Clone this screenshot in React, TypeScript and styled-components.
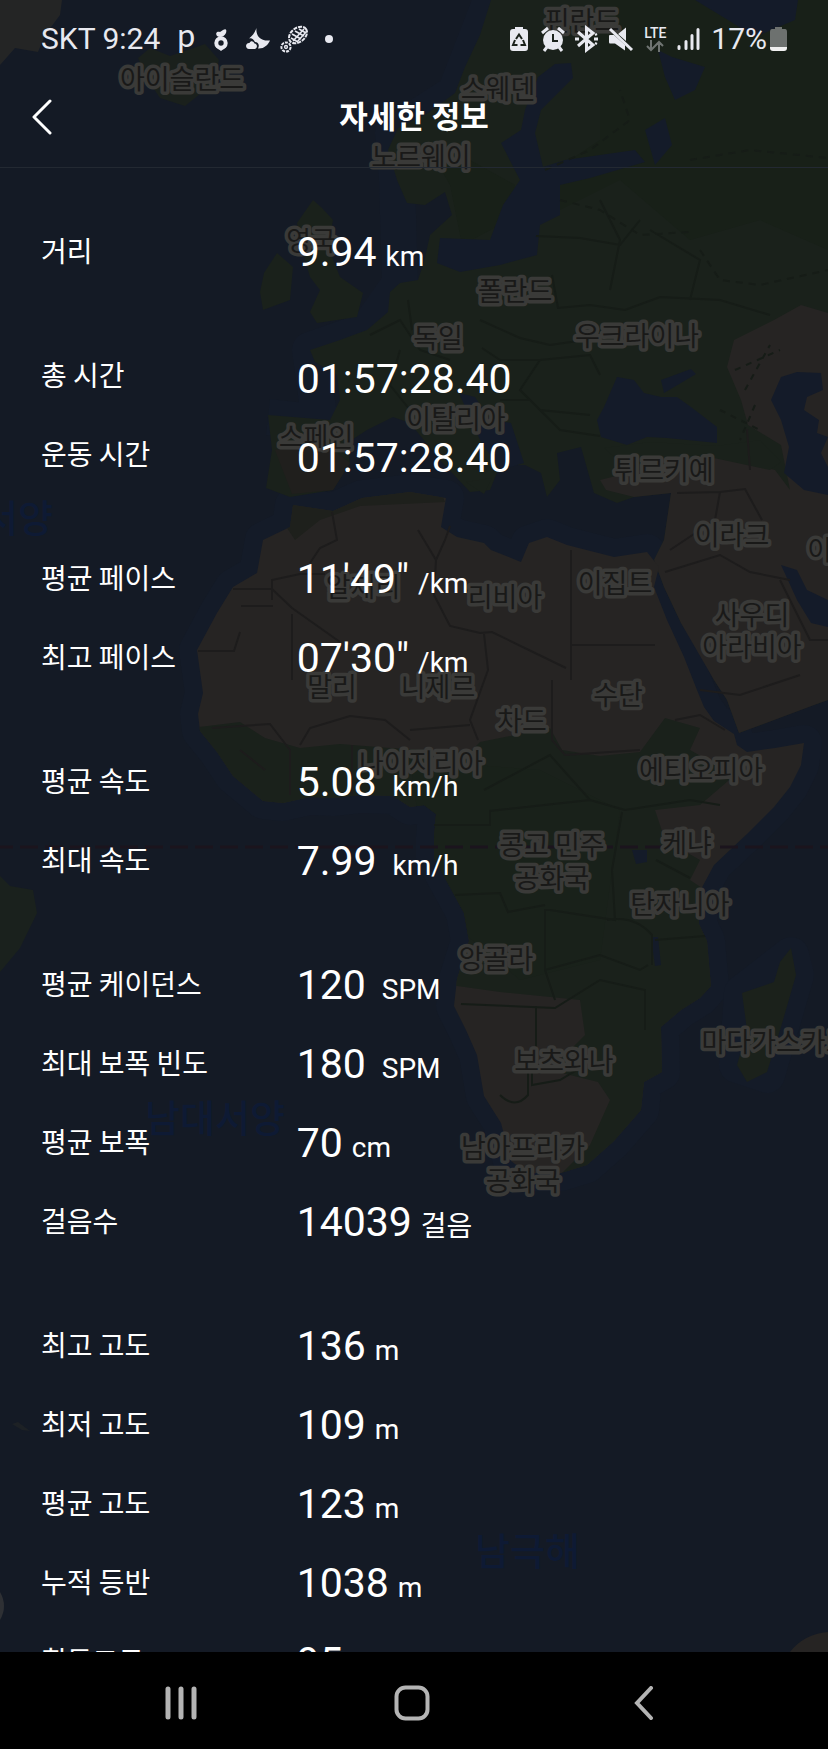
import React from "react";
import styled, { createGlobalStyle } from "styled-components";

const GlobalStyle = createGlobalStyle`
  * { box-sizing: border-box; }
  body { margin: 0; background: #000; }
  button { margin: 0; padding: 0; border: 0; background: none; color: inherit; cursor: pointer; }
`;

const latin = `Roboto, "Noto Sans CJK KR", sans-serif`;
const korean = `"Noto Sans CJK KR", sans-serif`;

const Screen = styled.div`
  display: flex;
  flex-direction: column;
  height: 100vh;
  color: #fff;
  font-family: ${latin};
`;

const AppArea = styled.div`
  position: relative;
  flex: 1;
  min-height: 0;
  display: flex;
  flex-direction: column;
  overflow: hidden;
  background: #141a25;
`;

const MapBackdrop = styled.svg`
  position: absolute;
  inset: 0;
  width: 100%;
  height: 100%;
`;

const MapLabel = styled.text`
  font: 400 27px ${korean};
  fill: #191918;
  stroke: #3a3a38;
  stroke-width: 7px;
  stroke-linejoin: round;
  paint-order: stroke;
`;

const SeaLabel = styled.text`
  font: 500 38px ${korean};
  fill: #0e1a34;
`;

const StatusBar = styled.div`
  position: relative;
  display: flex;
  align-items: center;
  justify-content: space-between;
  height: 70px;
  padding: 8px 41px 0;
  color: #e8e9f0;
  font-size: 30px;
  line-height: 36px;
`;

const StatusGroup = styled.div<{ $gap: number }>`
  display: flex;
  align-items: center;
  gap: ${(p) => p.$gap}px;
`;

const StatusIcon = styled.svg`
  display: block;
  width: 28px;
  height: 28px;
`;

const CarrierClock = styled.span`
  margin-right: 4px;
`;

const AppMark = styled.span`
  width: 28px;
  padding-bottom: 8px;
  text-align: center;
  font-family: Lato, sans-serif;
  font-size: 32px;
  line-height: 28px;
`;

const NetworkBadge = styled.span`
  display: flex;
  flex-direction: column;
  align-items: center;
  width: 28px;
  font-size: 14px;
  font-weight: 500;
  line-height: 14px;
`;

const BatteryIcon = styled.svg`
  display: block;
  width: 17px;
  height: 24px;
`;

const Header = styled.header`
  position: relative;
  display: grid;
  grid-template-columns: 84px 1fr 84px;
  align-items: center;
  height: 98px;
  padding-bottom: 4px;
  border-bottom: 1px solid #232932;
`;

const BackButton = styled.button`
  display: flex;
  align-items: center;
  justify-content: center;
  height: 64px;
`;

const Title = styled.h1`
  margin: 0;
  padding-bottom: 4px;
  text-align: center;
  font: 700 31px/44px ${korean};
`;

const Details = styled.main`
  position: relative;
  flex: 1;
  min-height: 0;
  overflow: hidden;
  display: flex;
  flex-direction: column;
  gap: 45px;
  padding: 47px 41px 0;
`;

const Group = styled.dl`
  flex: none;
  margin: 0;
`;

const Row = styled.div`
  display: grid;
  grid-template-columns: 34% 1fr;
  column-gap: 2px;
  align-items: center;
  height: 79px;
`;

const Label = styled.dt`
  padding-bottom: 9px;
  font: 400 28px/40px ${korean};
`;

const Value = styled.dd`
  margin: 0;
  font-size: 41px;
  line-height: 48px;
  white-space: nowrap;
`;

const Unit = styled.span<{ $wide?: boolean }>`
  margin-left: ${(p) => (p.$wide ? 16 : 9)}px;
  font-size: 28px;
`;

const NavBar = styled.nav`
  flex: none;
  display: grid;
  grid-template-columns: repeat(3, 1fr);
  align-items: center;
  height: 97px;
  padding: 4px 68px 0 65px;
  background: #000;
`;

const NavButton = styled.button`
  display: flex;
  align-items: center;
  justify-content: center;
  height: 72px;
  color: #b4b4b4;
`;

type Metric = { label: string; value: string; unit?: string; wide?: boolean };

const groups: Metric[][] = [
  [{ label: "거리", value: "9.94", unit: "km" }],
  [
    { label: "총 시간", value: "01:57:28.40" },
    { label: "운동 시간", value: "01:57:28.40" },
  ],
  [
    { label: "평균 페이스", value: "11'49\"", unit: "/km" },
    { label: "최고 페이스", value: "07'30\"", unit: "/km" },
  ],
  [
    { label: "평균 속도", value: "5.08", unit: "km/h", wide: true },
    { label: "최대 속도", value: "7.99", unit: "km/h", wide: true },
  ],
  [
    { label: "평균 케이던스", value: "120", unit: "SPM", wide: true },
    { label: "최대 보폭 빈도", value: "180", unit: "SPM", wide: true },
    { label: "평균 보폭", value: "70", unit: "cm" },
    { label: "걸음수", value: "14039", unit: "걸음" },
  ],
  [
    { label: "최고 고도", value: "136", unit: "m" },
    { label: "최저 고도", value: "109", unit: "m" },
    { label: "평균 고도", value: "123", unit: "m" },
    { label: "누적 등반", value: "1038", unit: "m" },
    { label: "획득고도", value: "95", unit: "m" },
  ],
];

const countries: [string, number, number][] = [
  ["핀란드", 582, 31],
  ["아이슬란드", 182, 89],
  ["스웨덴", 498, 99],
  ["노르웨이", 421, 167],
  ["영국", 311, 251],
  ["폴란드", 515, 301],
  ["독일", 438, 348],
  ["우크라이나", 637, 346],
  ["이탈리아", 456, 429],
  ["스페인", 316, 447],
  ["튀르키예", 664, 480],
  ["이라크", 732, 545],
  ["이란", 832, 560],
  ["알제리", 363, 597],
  ["리비아", 505, 607],
  ["이집트", 615, 593],
  ["사우디", 752, 625],
  ["아라비아", 752, 657],
  ["말리", 332, 697],
  ["니제르", 438, 697],
  ["수단", 618, 705],
  ["차드", 522, 731],
  ["나이지리아", 421, 773],
  ["에티오피아", 701, 780],
  ["콩고 민주", 552, 855],
  ["공화국", 552, 888],
  ["케냐", 687, 853],
  ["탄자니아", 680, 914],
  ["앙골라", 496, 969],
  ["보츠와나", 564, 1071],
  ["마다가스카르", 776, 1052],
  ["남아프리카", 523, 1158],
  ["공화국", 523, 1191],
];

const GREEN = "#1a211b";
const DARK_GREEN = "#182018";
const SAND = "#262423";
const SEA = "#141b29";

const AFRICA =
  "M293 505L333 511L362 498L410 492L446 498L441 527L457 537L484 543L491 550L521 562L529 543L547 537L567 545L614 557L647 552L659 567L654 587L667 620L684 657L697 690L704 707L714 721L734 734L737 745L747 752L775 748L804 743L801 765L790 787L774 807L747 834L714 865L699 893L699 924L707 941L711 986L700 998L681 1010L661 1027L662 1072L644 1082L641 1110L614 1141L587 1165L561 1173L527 1173L511 1161L501 1123L484 1096L477 1055L466 1030L454 1006L457 979L469 941L464 913L451 889L434 858L434 838L436 814L424 805L410 807L393 796L360 795L333 798L310 797L283 803L263 801L233 776L217 752L200 731L198 714L203 693L197 650L217 613L233 587L257 573L263 540L290 527Z";

function WorldMap() {
  return (
    <MapBackdrop viewBox="0 0 828 1652" preserveAspectRatio="xMidYMin slice" aria-hidden="true">
      <defs>
        <clipPath id="africa">
          <path d={AFRICA} />
        </clipPath>
      </defs>
      {/* coastal shelf */}
      <g fill="none" stroke="#141b28" strokeWidth="36" strokeLinejoin="round">
        <path d={AFRICA} />
        <path d="M268 417L320 423L310 350L367 330L400 283L397 180L393 133L455 93L491 0" />
        <path d="M791 955L796 975L767 1075L737 1065L742 993Z" />
      </g>
      <path d="M0 0H62L60 15L45 35L38 52L15 48L0 65Z" fill="#242525" />
      <path d="M138 58L150 48L170 56L205 44L219 60L215 82L185 106L160 98L148 80Z" fill="#1a201c" />

      {/* Eurasia */}
      <path
        d="M491 0L480 35L465 67L455 93L428 113L398 128L388 150L397 180L407 203L425 205L445 192L452 215L430 235L424 262L418 280L400 283L390 292L388 312L367 330L340 340L310 350L315 362L337 375L340 400L330 420L268 415L272 450L266 488L290 497L333 490L350 463L347 443L367 430L393 417L410 423L440 460L470 492L490 490L500 465L525 465L541 473L547 497L560 480L557 453L581 447L594 493L617 503L634 497L671 493L664 540L654 560L664 587L681 623L697 647L714 680L727 700L739 733L814 705L828 700V0Z"
        fill={GREEN}
      />
      <path d="M600 0H828V250L760 220L690 240L620 180L560 210L540 180L600 140Z" fill={DARK_GREEN} />
      <path d="M430 150L470 160L515 185L500 225L462 245L450 185Z" fill={DARK_GREEN} />
      <path
        d="M828 313L801 305L774 320L734 340L727 367L741 400L748 425L781 445L790 490L775 470L720 456L640 470L600 480L606 490L634 497L671 493L664 540L654 560L664 587L681 623L714 680L727 700L739 733L814 705L828 700Z"
        fill={SAND}
      />
      <path d="M275 450L320 440L350 463L333 490L292 494Z" fill="#201f1d" />
      <path d="M604 448L650 442L717 446L760 440L781 462L770 470L700 455L620 462Z" fill={GREEN} />

      {/* British Isles */}
      <path d="M313 200L322 208L333 220L328 247L340 277L363 293L357 317L317 323L310 312L320 290L310 277L303 253L297 223Z" fill={GREEN} />
      <path d="M277 253L293 267L290 300L263 310L260 292L264 273Z" fill={GREEN} />

      {/* inland seas */}
      <g fill={SEA}>
        <path d="M538 77L555 64L571 63L573 78L541 110L535 133L543 167L565 160L635 150L645 162L590 178L560 185L560 215L540 225L537 255L500 265L460 272L437 263L440 238L490 240L503 205L520 180L501 143L521 130L525 110Z" />
        <path d="M658 50L672 57L705 67L695 90L675 100L665 77Z" />
        <path d="M695 0L728 20L755 37L795 20L798 0Z" />
        <path d="M645 130L665 118L672 145L655 165Z" />
        <path d="M617 377L634 380L644 393L661 397L677 397L691 407L717 427L717 443L667 438L647 437L627 445L601 437L597 420L604 407Z" />
        <path d="M661 380L691 369L696 374L681 383L664 393Z" />
        <path d="M781 377L797 372L821 373L823 390L807 397L804 410L819 420L817 433L828 437L821 453L828 467V495L804 490L784 473L789 447L781 420L771 400Z" />
        <path d="M459 393L475 397L490 420L511 423L524 463L500 470L480 440Z" />
        <path d="M781 565L797 570L807 590L828 600V627L811 623L797 600Z" />
      </g>
      <path d="M466 482L492 478L484 494Z" fill={GREEN} />

      {/* Africa */}
      <path d={AFRICA} fill={SAND} />
      <g clipPath="url(#africa)">
        <path d="M280 490H440L445 502L360 506L320 520L295 540L285 525Z" fill="#1e201c" />
        <path
          d="M190 728L240 722L265 738L300 748L340 744L390 748L470 752L480 742L550 728L562 750L600 756L640 752L665 718L700 728L690 750L735 775L700 805L655 810L665 840L700 860L690 880L720 900V1020L670 1100L590 1180H555L590 1145L610 1100L598 1082L550 1070L585 1035L580 1000L500 992L450 985L400 820L260 820Z"
          fill={GREEN}
        />
        <path d="M410 760L540 770L620 810L600 960L520 980L460 930L420 830Z" fill="#19211a" />
        <path d="M632 850H647V862L636 864ZM651 937H658L661 965L655 966Z" fill={SEA} />
      </g>

      {/* Madagascar, South America, Antarctica */}
      <path d="M791 948L796 975L781 1027L767 1072L747 1082L737 1065L747 1030L742 993L774 982L780 962Z" fill="#1b211b" />
      <path d="M0 876L10 886L33 890L37 913L20 948L0 972Z" fill="#1a211d" />
      <path d="M12 1424L18 1422L30 1431L22 1430Z" fill="#1d2125" />
      <path d="M0 1592Q8 1606 0 1620Z" fill="#2e3034" />
      <path d="M790 1652Q804 1634 828 1632V1652Z" fill={SAND} />

      {/* borders */}
      <g fill="none" stroke="#1d1c1c" strokeWidth="2">
        <path d="M332 512L337 540L320 548L310 563M233 589H272M272 600V580L300 574L325 574M241 606H273M272 589L292 608L340 642M198 651H234L240 632M292 614V680" />
        <path d="M418 530L436 560L445 540L450 526M436 560L434 595L450 626L480 633L492 632L566 668M571 550V680M571 645H655M484 634L488 670L470 720L478 740" />
        <path d="M677 493L720 492L745 489L762 520M720 492L715 520L670 550M665 572L720 555L750 572L790 580M747 429L750 470M780 580L810 640L828 640M700 690L740 695L800 675" />
        <path d="M552 680V740L565 755L640 750M675 720L700 715L725 730M410 730L470 725M300 745L310 728L350 716L385 720L410 740M212 728L270 724L290 750V795M240 750L265 770M352 745V795" />
      </g>
      <g fill="none" stroke="#161c17" strokeWidth="2">
        <path d="M484 790L550 755L590 800L625 810L690 800L720 805M434 825H490V811L590 800M622 812L612 870L615 920L550 910H545V970L600 955L640 970L648 965M455 895L500 893L508 912L545 905M461 1004L555 1008L600 980L645 990V1030M536 1006V1058H532V1085L560 1080L585 1065M545 970L555 1000M655 940L705 936M500 1095Q515 1110 528 1095V1060M607 920Q635 915 652 935V965M656 860L690 878" />
        <path d="M536 236L580 238L620 245L640 220M552 275L558 308L590 305L625 310L660 297L720 300L770 315M480 320L520 338L550 345L585 340M482 348L500 360L540 360L590 355L600 375M540 360L520 390L540 410L590 415M500 400L530 400L560 430L600 436M370 335L400 320L420 350L450 360M600 200L620 240L610 290M650 230L700 260L690 300M400 350L390 385L410 410M408 300L412 330" />
        <path d="M545 170L590 150L630 120L620 90M560 200L600 210L640 235L690 232M690 160L750 150L828 158M700 250L720 280L760 285L828 270" strokeDasharray="7 6" />
        <path d="M735 370L780 350M745 390L770 345M720 410L760 430M755 405L740 440" strokeDasharray="6 6" />
      </g>
      <path d="M20 847H828M0 847H13" fill="none" stroke="#1b141d" strokeWidth="3" strokeDasharray="18 7" />

      <SeaLabel x="-87" y="532">북대서양</SeaLabel>
      <SeaLabel x="145" y="1132">남대서양</SeaLabel>
      <SeaLabel x="475" y="1565">남극해</SeaLabel>
      {countries.map(([name, x, y]) => (
        <MapLabel key={`${name}-${y}`} x={x} y={y} textAnchor="middle">
          {name}
        </MapLabel>
      ))}
    </MapBackdrop>
  );
}

function StatusIcons() {
  return (
    <StatusBar>
      <StatusGroup $gap={8}>
        <CarrierClock>SKT 9:24</CarrierClock>
        <AppMark>p</AppMark>
        <StatusIcon viewBox="0 0 28 28" aria-hidden="true">
          <circle cx="13" cy="18" r="4.7" fill="none" stroke="currentColor" strokeWidth="4" />
          <path d="M8 22L13 26L18 22Z" fill="currentColor" />
          <path d="M9 11C7 8 9 6 12 7L15 5C18 3 19 5 18 8C16 12 12 13 9 11Z" fill="currentColor" />
        </StatusIcon>
        <StatusIcon viewBox="0 0 28 28" fill="currentColor" aria-hidden="true">
          <path d="M12.500 3C11.500 10 16 16.500 26 15.500C24 20 20 24 14 23.500C16 20 14 17 11 17C9.500 13.500 7 12.500 5 13.500C8.500 11 11 7 12.500 3Z" />
          <path d="M5 24C1 24 1 17.500 5.500 18C6.500 15 10 16 10.500 18.500C14 19 13.500 24 10.500 24Z" />
        </StatusIcon>
        <StatusIcon viewBox="0 0 28 28" fill="none" stroke="currentColor" aria-hidden="true">
          <circle cx="6" cy="22" r="4.6" strokeWidth="2" strokeDasharray="3 1" />
          <circle cx="6" cy="22" r="1.4" strokeWidth="1.5" />
          <ellipse cx="18" cy="10" rx="10" ry="7" transform="rotate(-38 18 10)" strokeWidth="2" strokeDasharray="4 1" />
          <path d="M11 13L18 17M12 9L21 14M15 6L24 11M19 4L26 8M13 16L24 4M17 17L27 6" strokeWidth="1.6" />
        </StatusIcon>
        <StatusIcon viewBox="0 0 28 28" fill="currentColor" aria-hidden="true">
          <circle cx="13" cy="14" r="4" />
        </StatusIcon>
      </StatusGroup>
      <StatusGroup $gap={8}>
        <StatusGroup $gap={6}>
          <StatusIcon viewBox="0 0 28 28" aria-hidden="true">
            <path d="M10 2H18V4H20Q23 4 23 7V23Q23 26 20 26H8Q5 26 5 23V7Q5 4 8 4H10Z" fill="currentColor" />
            <path d="M11 14L14 9.500L17 14M18 15L20 20H15.500M12.500 20H8L10 15" fill="none" stroke="#1a211b" strokeWidth="2" />
          </StatusIcon>
          <StatusIcon viewBox="0 0 28 28" aria-hidden="true">
            <circle cx="14" cy="15" r="10" fill="currentColor" />
            <path d="M3 8L9 3M25 8L19 3M8 22L5 26M20 22L23 26" stroke="currentColor" strokeWidth="3" fill="none" />
            <path d="M14 9V16H19" stroke="#1a211b" strokeWidth="2" fill="none" />
          </StatusIcon>
          <StatusIcon viewBox="0 0 28 28" fill="none" stroke="currentColor" strokeWidth="3" aria-hidden="true">
            <path d="M5 7L20 20L13.500 25V3L20 8L5 21" />
            <path d="M2 14H6M21 14H25" />
            <path d="M22 10L24 9M22 18L24 19" strokeWidth="2" />
          </StatusIcon>
          <StatusIcon viewBox="0 0 28 28" aria-hidden="true">
            <path d="M11 9L19 2.500V16ZM2 11Q2 10 3 10H7L18 20V25.500L8 18.500H3Q2 18.500 2 17Z" fill="currentColor" />
            <path d="M3 4L25 25" stroke="currentColor" strokeWidth="3" />
          </StatusIcon>
          <NetworkBadge>
            LTE
            <svg width="18" height="12" viewBox="0 0 18 12" fill="none" stroke="#6f7472" strokeWidth="2" aria-hidden="true">
              <path d="M5 0V10M1 6L5 10L9 6M13 12V2M9 6L13 2L17 6" />
            </svg>
          </NetworkBadge>
          <StatusIcon viewBox="0 0 28 28" stroke="currentColor" strokeWidth="3" strokeLinecap="round" fill="none" aria-hidden="true">
            <path d="M4 21.500V23.500M11 16.500V23.500M17 10.500V23.500M23 4.500V23.500" />
          </StatusIcon>
        </StatusGroup>
        <StatusGroup $gap={3}>
          <span>17%</span>
          <BatteryIcon viewBox="0 0 17 24" aria-hidden="true">
            <path d="M5 0H12V2H15Q17 2 17 5V20H0V5Q0 2 2 2H5Z" fill="#6d716f" />
            <path d="M0 20H17V21Q17 24 14 24H3Q0 24 0 21Z" fill="#f0f0f0" />
          </BatteryIcon>
        </StatusGroup>
      </StatusGroup>
    </StatusBar>
  );
}

export default function App() {
  return (
    <Screen>
      <GlobalStyle />
      <AppArea>
        <WorldMap />
        <StatusIcons />
        <Header>
          <BackButton type="button" aria-label="뒤로">
            <svg width="20" height="36" viewBox="0 0 20 36" fill="none" stroke="currentColor" strokeWidth="3" strokeLinecap="round" strokeLinejoin="round">
              <path d="M18 2L2 18L18 34" />
            </svg>
          </BackButton>
          <Title>자세한 정보</Title>
        </Header>
        <Details>
          {groups.map((group) => (
            <Group key={group[0].label}>
              {group.map((metric) => (
                <Row key={metric.label}>
                  <Label>{metric.label}</Label>
                  <Value>
                    {metric.value}
                    {metric.unit && <Unit $wide={metric.wide}>{metric.unit}</Unit>}
                  </Value>
                </Row>
              ))}
            </Group>
          ))}
        </Details>
      </AppArea>
      <NavBar aria-label="시스템 탐색">
        <NavButton type="button" aria-label="최근 앱">
          <svg width="32" height="34" viewBox="0 0 32 34" stroke="currentColor" strokeWidth="5" strokeLinecap="round">
            <path d="M3 3V31M16 3V31M29 3V31" />
          </svg>
        </NavButton>
        <NavButton type="button" aria-label="홈">
          <svg width="36" height="36" viewBox="0 0 36 36" fill="none" stroke="currentColor" strokeWidth="4">
            <rect x="2.500" y="2.500" width="31" height="31" rx="9" />
          </svg>
        </NavButton>
        <NavButton type="button" aria-label="이전">
          <svg width="20" height="34" viewBox="0 0 20 34" fill="none" stroke="currentColor" strokeWidth="4" strokeLinecap="round">
            <path d="M17 2L3 17L17 32" />
          </svg>
        </NavButton>
      </NavBar>
    </Screen>
  );
}
